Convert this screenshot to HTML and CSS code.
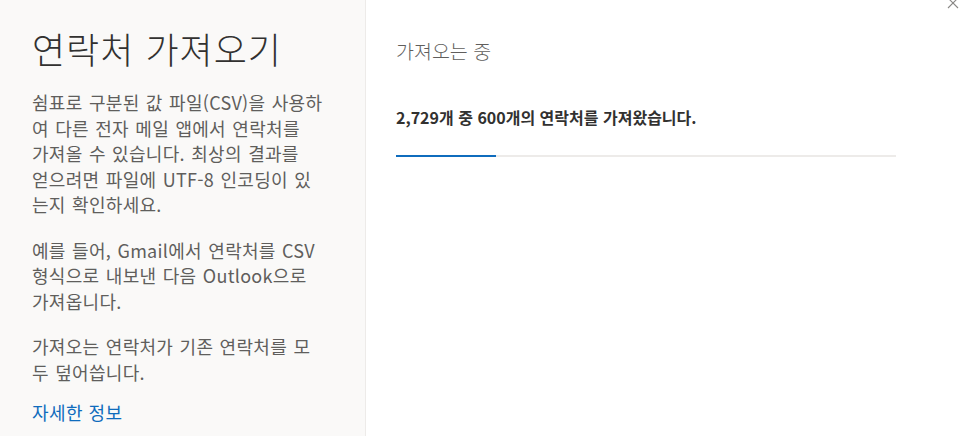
FILE: index.html
```html
<!DOCTYPE html>
<html lang="ko">
<head>
<meta charset="utf-8">
<link rel="stylesheet" href="styles.css">
</head>
<body>
<div class="dialog">
  <aside class="side">
    <h1 class="title">연락처 가져오기</h1>
    <p class="para">쉼표로 구분된 값 파일(CSV)을 사용하<br>여 다른 전자 메일 앱에서 연락처를<br>가져올 수 있습니다. 최상의 결과를<br>얻으려면 파일에 UTF-8 인코딩이 있<br>는지 확인하세요.</p>
    <p class="para">예를 들어, Gmail에서 연락처를 CSV<br>형식으로 내보낸 다음 Outlook으로<br>가져옵니다.</p>
    <p class="para">가져오는 연락처가 기존 연락처를 모<br>두 덮어씁니다.</p>
    <a class="link" href="#">자세한 정보</a>
  </aside>
  <main class="main">
    <h2 class="status">가져오는 중</h2>
    <p class="count">2,729개 중 600개의 연락처를 가져왔습니다.</p>
    <div class="track"><div class="fill" style="width: 20%"></div></div>
    <button class="close" aria-label="닫기">
      <svg width="12" height="12" viewBox="0 0 12 12"><path d="M1 1 L11 11 M11 1 L1 11" stroke="#8a8886" stroke-width="1.1" fill="none"/></svg>
    </button>
  </main>
</div>
</body>
</html>
```

FILE: styles.css
```css
html, body {
  margin: 0;
  padding: 0;
  background: #ffffff;
}
body {
  font-family: "Noto Sans CJK KR", "Noto Sans", sans-serif;
  color: #323130;
}
.dialog {
  display: flex;
  height: 436px;
  overflow: hidden;
}
.side {
  width: 294px;
  flex: none;
  background: #faf9f8;
  border-right: 1px solid #edebe9;
  padding: 26px 39px 0 32px;
}
.title {
  margin: 0 0 20px 0;
  font-family: "Noto Sans CJK KR Light", "Noto Sans CJK KR", sans-serif;
  font-size: 36px;
  font-weight: 300;
  line-height: 44px;
  color: #323130;
  letter-spacing: 1px;
  white-space: nowrap;
}
.para {
  margin: 0 0 20px 0;
  font-size: 18px;
  line-height: 25.5px;
  font-weight: 400;
  letter-spacing: 0.3px;
  word-spacing: 1px;
  color: #605e5c;
  white-space: nowrap;
}
.link {
  display: block;
  margin-top: -5px;
  font-size: 18px;
  line-height: 25.5px;
  letter-spacing: 0.45px;
  color: #0f6cbd;
  text-decoration: none;
}
.main {
  position: relative;
  flex: 1;
  padding: 37px 0 0 30px;
}
.status {
  margin: 0;
  font-family: "Noto Sans CJK KR Light", "Noto Sans CJK KR", sans-serif;
  font-size: 19.5px;
  line-height: 28px;
  font-weight: 300;
  color: #605e5c;
}
.count {
  margin: 41px 0 0 0;
  font-size: 16px;
  line-height: 22px;
  font-weight: 700;
  color: #323130;
}
.track {
  margin-top: 27px;
  width: 500px;
  height: 2px;
  background: #edebe9;
}
.fill {
  height: 2px;
  background: #0f6cbd;
}
.close {
  position: absolute;
  top: -3px;
  right: 20px;
  width: 12px;
  height: 12px;
  padding: 0;
  border: 0;
  background: none;
  line-height: 0;
}
```
